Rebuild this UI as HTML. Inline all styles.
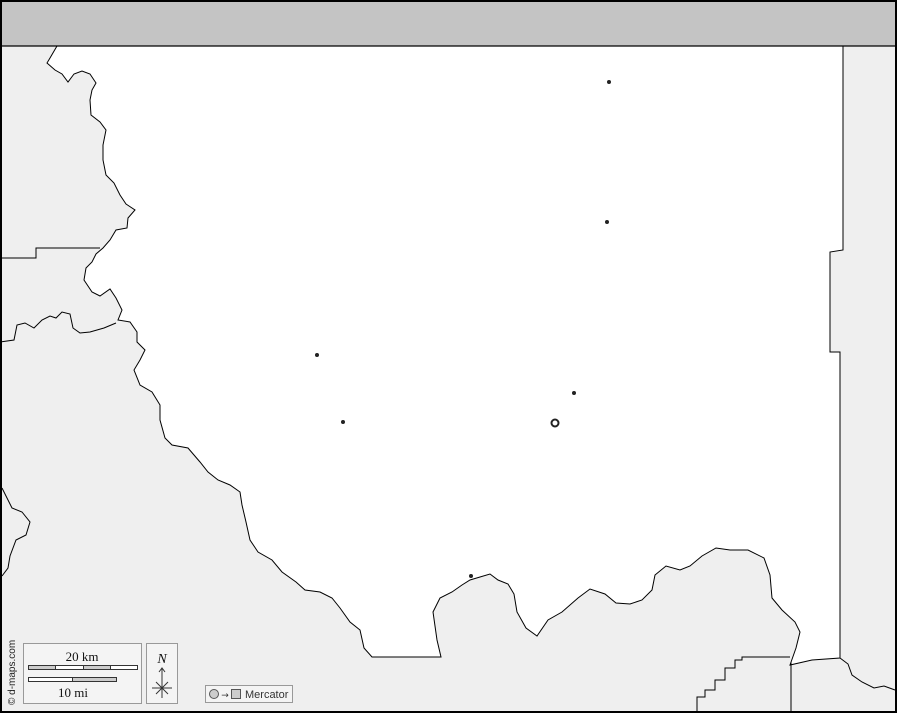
<!DOCTYPE html>
<html><head><style>
html,body{margin:0;padding:0;width:897px;height:713px;overflow:hidden;background:#000}
svg{display:block}
</style></head><body>
<svg width="897" height="713" viewBox="0 0 897 713" xmlns="http://www.w3.org/2000/svg">
<rect x="0" y="0" width="897" height="713" fill="#000"/>
<rect x="2" y="2" width="893" height="709" fill="#efefef"/>
<polygon fill="#fff" stroke="#000" stroke-width="1" points="57,46 50,58 47,63 55,70 62,74 68,82 74,74 82,71 90,74 96,83 92,90 90,100 91,115 100,122 106,130 103,145 103,160 106,175 114,183 120,195 126,204 135,210 128,218 127,228 116,230 110,240 103,248 96,254 92,262 86,268 84,280 92,292 100,296 110,289 116,298 122,310 118,320 130,322 137,332 137,342 145,350 140,360 134,370 140,385 152,392 160,405 160,420 165,438 172,445 188,448 200,462 208,472 218,480 230,485 240,492 242,505 246,522 250,540 258,552 272,560 282,572 296,582 305,590 320,592 332,598 340,608 350,622 360,630 364,648 372,657 441,657 437,640 433,612 440,598 452,592 462,585 470,580 480,577 490,574 498,580 508,584 514,594 517,612 526,628 537,636 548,620 562,612 578,598 590,589 605,594 616,603 630,604 642,600 652,590 655,575 666,566 680,570 690,566 702,556 716,548 730,550 748,550 764,558 770,575 772,598 782,610 795,622 800,632 796,648 790,665 812,660 840,658 840,352 830,352 830,252 843,250 843,46"/>
<polyline fill="none" stroke="#000" stroke-width="1" points="0,258 36,258 36,248 100,248"/>
<polyline fill="none" stroke="#000" stroke-width="1" points="0,342 14,340 17,325 25,323 34,328 42,320 50,316 56,318 62,312 70,314 73,328 80,333 90,332 104,328 116,323"/>
<polyline fill="none" stroke="#000" stroke-width="1" points="2,488 8,500 12,508 22,512 30,522 26,535 16,540 10,556 8,568 2,576"/>
<polyline fill="none" stroke="#000" stroke-width="1" points="697,711 697,697 705,697 705,690 715,690 715,680 725,680 725,668 735,668 735,660 742,660 742,657 790,657"/>
<polyline fill="none" stroke="#000" stroke-width="1" points="791,662 791,711"/>
<polyline fill="none" stroke="#000" stroke-width="1" points="840,658 848,664 852,675 862,682 874,688 884,686 895,690"/>
<rect x="2" y="2" width="893" height="44" fill="#c4c4c4"/>
<line x1="2" y1="46" x2="895" y2="46" stroke="#000" stroke-width="1.2"/>
<g fill="#222">
<circle cx="609" cy="82" r="2"/><circle cx="607" cy="222" r="2"/><circle cx="317" cy="355" r="2"/>
<circle cx="574" cy="393" r="2"/><circle cx="343" cy="422" r="2"/><circle cx="471" cy="576" r="2"/>
</g>
<circle cx="555" cy="423" r="3.5" fill="none" stroke="#222" stroke-width="2"/>
<text transform="translate(15,705) rotate(-90)" font-family="Liberation Sans, sans-serif" font-size="10" fill="#222">© d-maps.com</text>
<rect x="23.5" y="643.5" width="118" height="60" fill="#f4f4f4" stroke="#999"/>
<text x="82" y="661" text-anchor="middle" font-family="Liberation Serif, serif" font-size="13" fill="#111">20 km</text>
<rect x="28.5" y="665.5" width="109" height="4" fill="#fff" stroke="#333"/>
<rect x="28.5" y="665.5" width="27" height="4" fill="#ccc" stroke="#333"/>
<rect x="83.5" y="665.5" width="27" height="4" fill="#ccc" stroke="#333"/>
<rect x="28.5" y="677.5" width="44" height="4" fill="#fff" stroke="#333"/>
<rect x="72.5" y="677.5" width="44" height="4" fill="#ccc" stroke="#333"/>
<text x="73" y="697" text-anchor="middle" font-family="Liberation Serif, serif" font-size="13" fill="#111">10 mi</text>
<rect x="146.5" y="643.5" width="31" height="60" fill="#f4f4f4" stroke="#999"/>
<text x="162" y="663" text-anchor="middle" font-family="Liberation Serif, serif" font-style="italic" font-size="14" fill="#111">N</text>
<line x1="162" y1="668" x2="162" y2="698" stroke="#333"/>
<polyline points="159,672 162,668 165,672" fill="none" stroke="#333"/>
<line x1="152" y1="688" x2="172" y2="688" stroke="#333"/>
<line x1="156" y1="682" x2="168" y2="694" stroke="#333"/>
<line x1="168" y1="682" x2="156" y2="694" stroke="#333"/>
<rect x="205.5" y="685.5" width="87" height="17" fill="#f4f4f4" stroke="#999"/>
<circle cx="214" cy="694" r="4.5" fill="#ccc" stroke="#555"/>
<text x="225" y="698" text-anchor="middle" font-family="DejaVu Sans, sans-serif" font-size="9" fill="#333">→</text>
<rect x="231.5" y="689.5" width="9" height="9" fill="#ccc" stroke="#555"/>
<text x="245" y="698" font-family="Liberation Sans, sans-serif" font-size="11" fill="#333">Mercator</text>
</svg>
</body></html>
